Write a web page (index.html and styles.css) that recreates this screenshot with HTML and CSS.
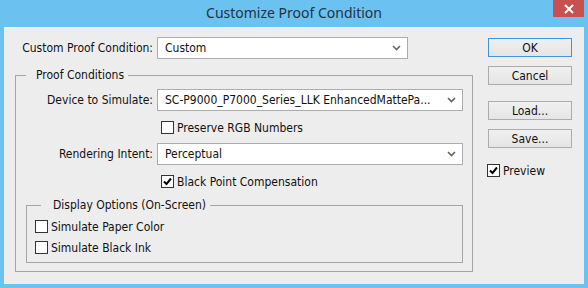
FILE: index.html
```html
<!DOCTYPE html>
<html lang="en">

<head>
    <meta charset="UTF-8">
    <meta name="viewport" content="width=device-width, initial-scale=1.0">
    <title>Customize Proof Condition</title>
    <link rel="stylesheet" href="styles.css">
</head>

<body>
    <div class="window">
        <!-- Title bar -->
        <div class="titlebar">
            <span></span>
            <div class="title">Customize Proof Condition</div>
            <div class="close-wrap">
                <button class="close" aria-label="Close">
                    <svg width="10" height="10" viewBox="0 0 10 10">
                        <path d="M1 1 L9 9 M9 1 L1 9" stroke="#fff" stroke-width="2" fill="none" />
                    </svg>
                </button>
            </div>
        </div>

        <div class="client">
            <div class="main">
                <div class="field-row top-row">
                    <label class="field-label">Custom Proof Condition:</label>
                    <div class="dropdown short">
                        <span>Custom</span>
                        <svg class="chevron" width="9" height="6" viewBox="0 0 9 6">
                            <polyline points="1,1 4.5,4.5 8,1" fill="none" stroke="#666" stroke-width="1.6" />
                        </svg>
                    </div>
                </div>

                <fieldset class="group proof">
                    <legend>Proof Conditions</legend>

                    <div class="field-row">
                        <label class="field-label">Device to Simulate:</label>
                        <div class="dropdown">
                            <span>SC-P9000_P7000_Series_LLK EnhancedMattePa...</span>
                            <svg class="chevron" width="9" height="6" viewBox="0 0 9 6">
                                <polyline points="1,1 4.5,4.5 8,1" fill="none" stroke="#666" stroke-width="1.6" />
                            </svg>
                        </div>
                    </div>

                    <label class="check-row indent gap-a">
                        <span class="checkbox"></span>Preserve RGB Numbers
                    </label>

                    <div class="field-row gap-b">
                        <label class="field-label">Rendering Intent:</label>
                        <div class="dropdown">
                            <span>Perceptual</span>
                            <svg class="chevron" width="9" height="6" viewBox="0 0 9 6">
                                <polyline points="1,1 4.5,4.5 8,1" fill="none" stroke="#666" stroke-width="1.6" />
                            </svg>
                        </div>
                    </div>

                    <label class="check-row indent gap-a">
                        <span class="checkbox checked">
                            <svg width="11" height="11" viewBox="0 0 11 11">
                                <path d="M2 5.5 L4.5 8 L9 2.5" fill="none" stroke="#000" stroke-width="2" />
                            </svg>
                        </span>Black Point Compensation
                    </label>

                    <fieldset class="group display">
                        <legend>Display Options (On-Screen)</legend>
                        <label class="check-row">
                            <span class="checkbox"></span>Simulate Paper Color
                        </label>
                        <label class="check-row gap-c">
                            <span class="checkbox"></span>Simulate Black Ink
                        </label>
                    </fieldset>
                </fieldset>
            </div>

            <div class="side">
                <button class="btn default">OK</button>
                <button class="btn">Cancel</button>
                <button class="btn spaced">Load...</button>
                <button class="btn">Save...</button>
                <label class="check-row preview">
                    <span class="checkbox checked">
                        <svg width="11" height="11" viewBox="0 0 11 11">
                            <path d="M2 5.5 L4.5 8 L9 2.5" fill="none" stroke="#000" stroke-width="2" />
                        </svg>
                    </span>Preview
                </label>
            </div>
        </div>
    </div>
</body>

</html>
```

FILE: styles.css
```css
body {
    margin: 0;
    padding: 0;
    font-family: 'DejaVu Sans Condensed', 'DejaVu Sans', sans-serif;
    font-size: 12px;
    color: #111;
}

.window {
    width: 588px;
    height: 288px;
    box-sizing: border-box;
    background-color: #6bc1f0;
    padding: 0 4px 4px;
    display: flex;
    flex-direction: column;
}

/* Title bar */

.titlebar {
    height: 27px;
    display: grid;
    grid-template-columns: 1fr auto 1fr;
    margin: 0 -4px;
}

.title {
    font-family: 'Noto Sans', sans-serif;
    font-size: 14px;
    line-height: 25px;
    color: #253140;
}

.close-wrap {
    display: flex;
    justify-content: flex-end;
    align-items: flex-start;
    padding-right: 4px;
}

.close {
    width: 31px;
    height: 17px;
    border: none;
    padding: 0;
    background-color: #c75050;
    display: flex;
    align-items: center;
    justify-content: center;
}

/* Client area */

.client {
    flex: 1;
    background-color: #ededed;
    display: flex;
    padding: 10px 12px 0 11px;
    gap: 15px;
}

.main {
    width: 458px;
    display: flex;
    flex-direction: column;
}

.field-row {
    display: grid;
    grid-template-columns: 137px 306px;
    column-gap: 4px;
    align-items: center;
}

.top-row {
    grid-template-columns: 138px 251px;
}

.field-label {
    text-align: right;
    white-space: nowrap;
}

.dropdown {
    height: 22px;
    box-sizing: border-box;
    background-color: #fff;
    border: 1px solid #abadb3;
    display: flex;
    align-items: center;
    justify-content: space-between;
    padding: 0 6px 0 7px;
    white-space: nowrap;
}

.chevron {
    flex-shrink: 0;
}

/* Group boxes */

.group {
    margin: 0;
    min-inline-size: 0;
    border: 1px solid #a5a5a5;
}

.group legend {
    line-height: 16px;
    padding: 0;
}

.proof {
    margin-top: 8px;
    padding: 6px 9px 8px 0;
}

.proof > legend {
    margin-left: 10px;
    padding: 0 4px 0 10px;
}

.display {
    margin: 8px 0 0 10px;
    padding: 6px 0 7px 8px;
}

.display > legend {
    margin-left: 6px;
    padding: 0 4px 0 12px;
}

/* Checkboxes */

.check-row {
    height: 15px;
    display: flex;
    align-items: center;
    white-space: nowrap;
}

.check-row.indent {
    margin-left: 145px;
}

.gap-a {
    margin-top: 9px;
}

.gap-b {
    margin-top: 8px;
}

.gap-c {
    margin-top: 6px;
}

.checkbox {
    width: 13px;
    height: 13px;
    box-sizing: border-box;
    border: 1px solid #333;
    background-color: #fff;
    margin-right: 3px;
    display: flex;
    align-items: center;
    justify-content: center;
}

/* Side buttons */

.side {
    width: 84px;
    padding-top: 1px;
    display: flex;
    flex-direction: column;
}

.btn {
    height: 19px;
    padding: 0;
    font-family: inherit;
    font-size: 12px;
    color: #111;
    background: linear-gradient(#f0f0f0, #e5e5e5);
    border: 1px solid #acacac;
    margin-top: 9px;
}

.btn.default {
    margin-top: 0;
    border-color: #3c96e0;
}

.btn.spaced {
    margin-top: 16px;
}

.preview {
    margin-top: 15px;
    margin-left: -1px;
}
```
